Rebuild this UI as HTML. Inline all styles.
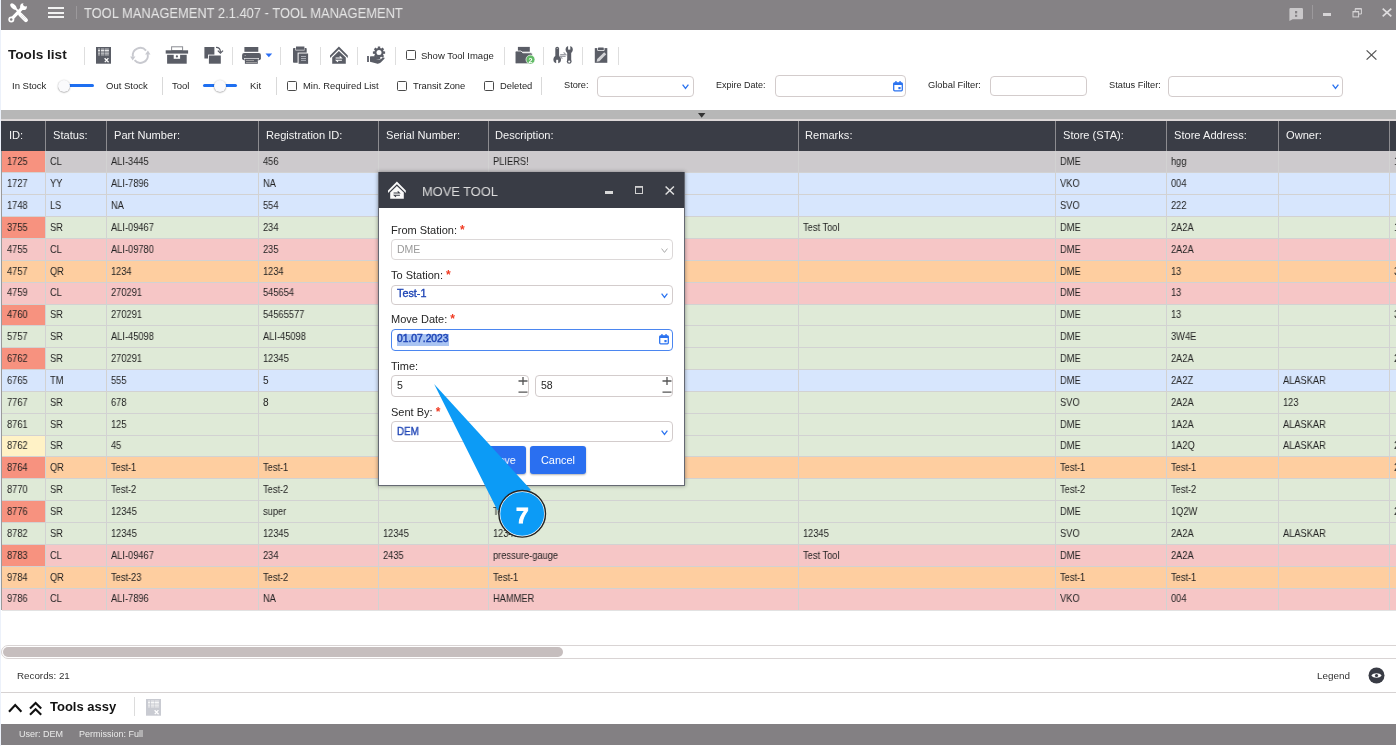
<!DOCTYPE html>
<html><head><meta charset="utf-8"><title>Tool Management</title>
<style>
*{box-sizing:border-box;margin:0;padding:0}
html,body{width:1396px;height:746px;overflow:hidden;background:#fff;font-family:"Liberation Sans", sans-serif}
body{position:relative}
.a{position:absolute}
.t{position:absolute;white-space:nowrap;line-height:1;will-change:transform}
.cb{position:absolute;width:10px;height:10px;border:1.3px solid #4a4a4a;border-radius:1.5px;background:#fff}
.inp{position:absolute;border:1px solid #d3cccc;border-radius:4px;background:#fff}
svg{position:absolute;overflow:visible}
</style></head>
<body>
<div class="a" style="left:0px;top:0px;width:1px;height:746px;background:#ecf1fa"></div>
<div class="a" style="left:1px;top:0px;width:1395px;height:30px;background:#858285"></div>
<svg style="left:8px;top:2px" width="20" height="21" viewBox="0 0 20 21">
<g fill="#fff" stroke="none">
<ellipse cx="5.4" cy="4.4" rx="3.8" ry="2.15" transform="rotate(45 5.4 4.4)"/>
</g>
<path d="M7 6 L12.2 11.2" stroke="#fff" stroke-width="1.8"/>
<path d="M12.2 12.4 L17.9 18.1" stroke="#fff" stroke-width="4.1" stroke-linecap="round"/>
<path d="M13.4 12.4 L17.8 16.8 M12.4 13.6 L16.6 17.8" stroke="#cfcfcf" stroke-width="0.5"/>
<path d="M3.3 17.4 L14.6 5.6" stroke="#fff" stroke-width="3.2"/>
<circle cx="3.3" cy="17.4" r="3" fill="#fff"/>
<circle cx="3.2" cy="17.5" r="1.25" fill="#858285"/>
<circle cx="15.5" cy="4.7" r="3.4" fill="#fff"/>
<circle cx="17.5" cy="2.2" r="2.35" fill="#858285"/>
</svg>
<div class="a" style="left:48px;top:7.1px;width:16px;height:2px;background:#f2f2f2"></div>
<div class="a" style="left:48px;top:11.6px;width:16px;height:2px;background:#f2f2f2"></div>
<div class="a" style="left:48px;top:15.9px;width:16px;height:2px;background:#f2f2f2"></div>
<div class="a" style="left:76px;top:6px;width:1px;height:13px;background:#9c999c"></div>
<div class="t" style="left:84.30px;top:6.30px;font-size:14.3px;color:#e6e6e6;font-weight:normal;transform:scaleX(0.903);transform-origin:0 0">TOOL MANAGEMENT 2.1.407 - TOOL MANAGEMENT</div>
<svg style="left:1289px;top:8px" width="14" height="13" viewBox="0 0 14 13">
<path d="M1.2 0 H12.8 A1.2 1.2 0 0 1 14 1.2 V10 A1.2 1.2 0 0 1 12.8 11.2 H3.6 L0.4 13 V1.2 A1.2 1.2 0 0 1 1.2 0Z" fill="#cac8ca"/>
<rect x="6" y="3" width="2.2" height="2.4" fill="#858285"/><rect x="6" y="6.8" width="2.2" height="2" fill="#858285"/>
</svg>
<div class="a" style="left:1312px;top:5px;width:1px;height:14px;background:#9c999c"></div>
<div class="a" style="left:1323px;top:13px;width:8px;height:3px;background:#d6d4d6"></div>
<svg style="left:1352px;top:8px" width="10" height="10" viewBox="0 0 10 10">
<path d="M3.2 3 V0.6 H9.4 V6 H6.8" fill="none" stroke="#d6d4d6" stroke-width="1"/>
<rect x="3.2" y="0.2" width="6.2" height="1.3" fill="#d6d4d6"/>
<rect x="1" y="3.5" width="5.6" height="5.4" fill="none" stroke="#d6d4d6" stroke-width="1"/>
<rect x="1" y="3.1" width="5.6" height="1.3" fill="#d6d4d6"/>
</svg>
<svg style="left:1382px;top:8px" width="10" height="9" viewBox="0 0 10 9">
<path d="M0.7 0.6 L9.3 8.4 M9.3 0.6 L0.7 8.4" stroke="#dedcde" stroke-width="1.7"/>
</svg>
<div class="t" style="left:8.00px;top:48.09px;font-size:13.6px;color:#1b1b1b;font-weight:bold;">Tools list</div>
<div class="a" style="left:84px;top:47px;width:1px;height:18px;background:#dedede"></div>
<div class="a" style="left:232px;top:47px;width:1px;height:18px;background:#dedede"></div>
<div class="a" style="left:280px;top:47px;width:1px;height:18px;background:#dedede"></div>
<div class="a" style="left:320px;top:47px;width:1px;height:18px;background:#dedede"></div>
<div class="a" style="left:357px;top:47px;width:1px;height:18px;background:#dedede"></div>
<div class="a" style="left:395px;top:47px;width:1px;height:18px;background:#dedede"></div>
<div class="a" style="left:504px;top:47px;width:1px;height:18px;background:#dedede"></div>
<div class="a" style="left:543px;top:47px;width:1px;height:18px;background:#dedede"></div>
<div class="a" style="left:582px;top:47px;width:1px;height:18px;background:#dedede"></div>
<div class="a" style="left:618px;top:47px;width:1px;height:18px;background:#dedede"></div>
<svg style="left:96px;top:47px" width="15" height="17" viewBox="0 0 15 17">
<rect x="0" y="0" width="15" height="16.7" fill="#5a5d66"/>
<rect x="2" y="1.1" width="2" height="7.7" fill="#fff" opacity="0.35"/><rect x="2" y="2.9" width="2" height="1.2" fill="#fff" opacity="0.75"/><rect x="2" y="5.9" width="2" height="1.3" fill="#fff" opacity="0.3"/><rect x="4.9" y="1.1" width="3.1999999999999993" height="7.7" fill="#fff" opacity="0.35"/><rect x="4.9" y="2.9" width="3.1999999999999993" height="1.2" fill="#fff" opacity="0.75"/><rect x="4.9" y="5.9" width="3.1999999999999993" height="1.3" fill="#fff" opacity="0.3"/><rect x="8.7" y="1.1" width="4.200000000000001" height="7.7" fill="#fff" opacity="0.35"/><rect x="8.7" y="2.9" width="4.200000000000001" height="1.2" fill="#fff" opacity="0.75"/><rect x="8.7" y="5.9" width="4.200000000000001" height="1.3" fill="#fff" opacity="0.3"/>
<path d="M8.6 11.2 L12.6 15.2 M12.4 11.2 L8.8 15.2" stroke="#fff" stroke-width="1.25"/>
</svg>
<svg style="left:130px;top:47px" width="21" height="17" viewBox="0 0 21 17">
<g fill="none" stroke="#c8c9cf" stroke-width="1.9">
<path d="M2.91 9.7 A7.5 7.5 0 0 1 16.05 3.58"/>
<path d="M17.69 7.1 A7.5 7.5 0 0 1 4.55 13.22"/>
</g>
<path d="M17.9 3.6 L15.1 7.6 L20.5 7.6 Z" fill="#c8c9cf"/>
<path d="M2.7 13.4 L0.1 9.4 L5.5 9.4 Z" fill="#c8c9cf"/>
</svg>
<svg style="left:165px;top:46px" width="24" height="18" viewBox="0 0 24 18">
<rect x="6.6" y="0.8" width="11" height="3.8" fill="none" stroke="#8a8c92" stroke-width="1"/>
<rect x="0.7" y="4.3" width="22.4" height="3.3" fill="#5a5d66"/>
<rect x="2.1" y="8.8" width="19.6" height="8.9" fill="#5a5d66"/>
<rect x="8.7" y="8" width="6.4" height="4.8" fill="#fff"/>
<circle cx="11.9" cy="10.4" r="1.1" fill="#5a5d66"/>
</svg>
<svg style="left:204px;top:46px" width="20" height="18" viewBox="0 0 20 18">
<rect x="0.4" y="1" width="10" height="11.5" fill="#5a5d66"/>
<rect x="4" y="8.6" width="13.7" height="9.4" fill="#fff"/>
<rect x="4.9" y="9.5" width="11.9" height="8.2" fill="#5a5d66"/>
<path d="M12 1.4 C14.6 1.4 16.4 3.2 16.4 6" fill="none" stroke="#5a5d66" stroke-width="1.2"/>
<path d="M13.8 4.6 L16.4 7.2 L19 4.6" fill="none" stroke="#5a5d66" stroke-width="1.3"/>
</svg>
<svg style="left:241px;top:46px" width="21" height="18" viewBox="0 0 21 18">
<rect x="3.4" y="1" width="13.9" height="4.8" fill="#5a5d66"/>
<rect x="1.1" y="6.9" width="18.8" height="7.3" rx="2" fill="#5a5d66"/>
<rect x="3" y="12.2" width="15" height="1.2" fill="#fff"/>
<rect x="3.9" y="12.8" width="12.9" height="5" fill="#5a5d66"/>
<rect x="5" y="14.2" width="8" height="0.8" fill="#aaa"/><rect x="5" y="16" width="11" height="0.8" fill="#aaa"/>
<rect x="3.6" y="9" width="1.2" height="0.9" fill="#aaa"/>
</svg>
<svg style="left:265px;top:53px" width="8" height="5" viewBox="0 0 8 5"><path d="M0.5 0.5 H7.2 L3.85 4.2Z" fill="#2a6ef5"/></svg>
<svg style="left:292px;top:46px" width="17" height="18" viewBox="0 0 17 18">
<rect x="1" y="2" width="13.7" height="14.8" rx="0.8" fill="#5a5d66"/>
<rect x="3.4" y="0" width="9.2" height="4.4" fill="#fff"/>
<rect x="4" y="0.5" width="8.4" height="3.3" fill="#5a5d66"/>
<rect x="5.6" y="6.6" width="11" height="11.4" fill="#fff"/>
<rect x="6.6" y="7.5" width="9.5" height="10.3" fill="#5a5d66"/>
<rect x="9" y="10" width="5" height="0.9" fill="#b4b7c0"/><rect x="9" y="12" width="5" height="0.9" fill="#b4b7c0"/><rect x="9" y="13.9" width="5" height="0.9" fill="#b4b7c0"/>
</svg>
<svg style="left:330px;top:46px" width="18" height="18" viewBox="0 0 18 18">
<path d="M0 9.4 L8.9 0.6 L17.8 9.4 V11.9 L8.9 3.3 L0 11.9Z" fill="#5a5d66"/>
<path d="M2.2 11.6 L8.9 5.1 L15.8 11.6 V17.8 H2.2Z" fill="#5a5d66"/>
<path d="M5.6 11.9 H11.4 L9.7 10.3 M11.9 14.3 H6.3 L8 15.9" stroke="#fff" stroke-width="1.05" fill="none"/>
</svg>
<svg style="left:367px;top:46px" width="19" height="18" viewBox="0 0 19 18">
<g transform="translate(12 6.6)">
<circle r="4.7" fill="#5a5d66"/>
<g fill="#5a5d66">
<rect x="-1.2" y="-6.1" width="2.4" height="12.2"/>
<rect x="-1.2" y="-6.1" width="2.4" height="12.2" transform="rotate(45)"/>
<rect x="-1.2" y="-6.1" width="2.4" height="12.2" transform="rotate(90)"/>
<rect x="-1.2" y="-6.1" width="2.4" height="12.2" transform="rotate(135)"/>
</g>
<circle r="2.5" fill="#fff"/>
</g>
<rect x="0.1" y="10" width="1.8" height="6" fill="#5a5d66"/>
<path d="M3 10.6 C5 10 7.6 10 9.6 10.6 L12.6 11.4 C13.6 11.7 13.6 12.9 12.6 12.9 L8.8 12.9 L13 13.4 L16.2 11.6 C17.2 11.2 18 12 17.4 12.8 L13.8 16.6 C12.8 17.6 11 17.9 9.6 17.5 L3 15.8Z" fill="#5a5d66"/>
</svg>
<div class="cb" style="left:406px;top:50px"></div>
<div class="t" style="left:421.30px;top:50.76px;font-size:9.5px;color:#262626;font-weight:normal;">Show Tool Image</div>
<svg style="left:514px;top:46px;will-change:transform" width="22" height="18" viewBox="0 0 22 18">
<rect x="3.9" y="0.9" width="11.9" height="4.8" fill="#5a5d66"/>
<path d="M1.1 6.4 Q1.1 5 2.5 5 H7 L8.8 6.8 H16.8 Q18.4 6.8 18.4 8.2 V16.4 Q18.4 17.8 17 17.8 H2.5 Q1.1 17.8 1.1 16.4 Z" fill="#5a5d66" stroke="#fff" stroke-width="0.8"/>
<circle cx="16.5" cy="13.6" r="4.5" fill="#62bb66" stroke="#fff" stroke-width="0.7"/>
<text x="16.6" y="16.5" font-family="Liberation Sans" font-weight="bold" font-size="7.2" fill="#fff" text-anchor="middle">2</text>
</svg>
<svg style="left:553px;top:46px" width="20" height="18" viewBox="0 0 20 18">
<rect x="2.3" y="0.7" width="3.8" height="12" rx="1.9" fill="#5a5d66"/>
<circle cx="4.2" cy="13.6" r="3.8" fill="#5a5d66"/>
<rect x="3.2" y="13.8" width="2" height="4.2" fill="#fff"/>
<circle cx="4.2" cy="2.5" r="0.6" fill="#ccc"/>
<circle cx="16.2" cy="3.6" r="3.6" fill="#5a5d66"/>
<rect x="15.1" y="0" width="2.2" height="3.6" fill="#fff"/>
<rect x="14.2" y="4" width="4" height="11" fill="#5a5d66"/>
<circle cx="16.2" cy="15.4" r="2.4" fill="#5a5d66"/>
<circle cx="16.2" cy="15.6" r="1.1" fill="#fff"/>
<path d="M7.2 8.6 H12.8 L10.6 6.4 M12.6 10.4 H7.2 L9.4 12.6" stroke="#9ea0a7" stroke-width="1.2" fill="none"/>
</svg>
<svg style="left:594px;top:46px" width="14" height="18" viewBox="0 0 14 18">
<rect x="0.8" y="2.1" width="12.5" height="14.7" fill="#5a5d66"/>
<rect x="3.3" y="0.8" width="7.2" height="4.2" rx="1" fill="#fff"/>
<rect x="4" y="1.4" width="5.8" height="2.9" rx="0.6" fill="#5a5d66"/>
<path d="M2.6 15.8 L3.2 13 L10.2 6.2 L12.2 8.2 L5.4 15.2 Z" fill="#d2d3d6"/>
</svg>
<svg style="left:1366px;top:50px" width="11" height="10" viewBox="0 0 11 10"><path d="M0.6 0.4 L10.4 9.6 M10.4 0.4 L0.6 9.6" stroke="#555" stroke-width="1.3"/></svg>
<div class="t" style="left:12.00px;top:80.66px;font-size:9.5px;color:#262626;font-weight:normal;">In Stock</div>
<div class="a" style="left:64px;top:84.0px;width:30px;height:3.0px;background:#1e6ff1;border-radius:1.5px"></div><div class="a" style="left:58px;top:79.5px;width:12px;height:12px;border-radius:6px;background:#fafafc;box-shadow:0 0.5px 1.5px rgba(0,0,0,0.45)"></div>
<div class="t" style="left:106.00px;top:80.66px;font-size:9.5px;color:#262626;font-weight:normal;">Out Stock</div>
<div class="a" style="left:162px;top:77px;width:1px;height:18px;background:#d9d9d9"></div>
<div class="t" style="left:172.10px;top:80.66px;font-size:9.5px;color:#262626;font-weight:normal;">Tool</div>
<div class="a" style="left:202.5px;top:84.0px;width:34.5px;height:3.0px;background:#1e6ff1;border-radius:1.5px"></div><div class="a" style="left:213.7px;top:79.5px;width:12px;height:12px;border-radius:6px;background:#fafafc;box-shadow:0 0.5px 1.5px rgba(0,0,0,0.45)"></div>
<div class="t" style="left:249.70px;top:80.66px;font-size:9.5px;color:#262626;font-weight:normal;">Kit</div>
<div class="a" style="left:276px;top:77px;width:1px;height:18px;background:#d9d9d9"></div>
<div class="cb" style="left:287px;top:81px"></div>
<div class="t" style="left:303.00px;top:80.74px;font-size:9.4px;color:#262626;font-weight:normal;">Min. Required List</div>
<div class="cb" style="left:397px;top:81px"></div>
<div class="t" style="left:413.00px;top:80.74px;font-size:9.4px;color:#262626;font-weight:normal;">Transit Zone</div>
<div class="cb" style="left:484px;top:81px"></div>
<div class="t" style="left:499.60px;top:80.74px;font-size:9.4px;color:#262626;font-weight:normal;">Deleted</div>
<div class="a" style="left:541px;top:77px;width:1px;height:18px;background:#d9d9d9"></div>
<div class="t" style="left:564.00px;top:80.91px;font-size:9.2px;color:#262626;font-weight:normal;">Store:</div>
<div class="inp" style="left:597px;top:75.5px;width:97px;height:21px"></div>
<svg style="left:682px;top:84px" width="7" height="5.4" viewBox="0 0 7 5.4"><path d="M0.6 0.6 L3.5 4.4 L6.4 0.6" fill="none" stroke="#2b73f0" stroke-width="1.3"/></svg>
<div class="t" style="left:715.80px;top:81.08px;font-size:9.0px;color:#262626;font-weight:normal;">Expire Date:</div>
<div class="inp" style="left:775px;top:75px;width:131px;height:21.5px"></div>
<svg style="left:893px;top:80.5px" width="10" height="10.5" viewBox="0 0 10 10.5">
<rect x="0.7" y="1.8" width="8.6" height="8" rx="1" fill="none" stroke="#2b73f0" stroke-width="1.3"/>
<rect x="0.7" y="1.8" width="8.6" height="2.2" fill="#2b73f0"/>
<rect x="2.3" y="0" width="1.3" height="2.4" fill="#2b73f0"/><rect x="6.4" y="0" width="1.3" height="2.4" fill="#2b73f0"/>
<rect x="5.4" y="6" width="2.2" height="2.2" fill="#2b73f0"/>
</svg>
<div class="t" style="left:928.00px;top:80.79px;font-size:9.35px;color:#262626;font-weight:normal;">Global Filter:</div>
<div class="inp" style="left:990px;top:75.5px;width:97px;height:20.5px"></div>
<div class="t" style="left:1108.60px;top:80.87px;font-size:9.25px;color:#262626;font-weight:normal;">Status Filter:</div>
<div class="inp" style="left:1168px;top:75.5px;width:175px;height:21px"></div>
<svg style="left:1332px;top:84px" width="7" height="5.4" viewBox="0 0 7 5.4"><path d="M0.6 0.6 L3.5 4.4 L6.4 0.6" fill="none" stroke="#2b73f0" stroke-width="1.3"/></svg>
<div class="a" style="left:1px;top:110px;width:1395px;height:9px;background:#b7b7b7"></div>
<div class="a" style="left:1px;top:119px;width:1395px;height:2px;background:#ddd8d8"></div>
<svg style="left:698px;top:113px" width="8" height="5" viewBox="0 0 8 5"><path d="M0 0 H7.4 L3.7 4.8Z" fill="#333"/></svg>
<div class="a" style="left:1px;top:121px;width:1395px;height:30px;background:#3a3d46"></div>
<div class="a" style="left:45px;top:121px;width:1px;height:30px;background:#8c8c90"></div>
<div class="a" style="left:106px;top:121px;width:1px;height:30px;background:#8c8c90"></div>
<div class="a" style="left:258px;top:121px;width:1px;height:30px;background:#8c8c90"></div>
<div class="a" style="left:378px;top:121px;width:1px;height:30px;background:#8c8c90"></div>
<div class="a" style="left:488px;top:121px;width:1px;height:30px;background:#8c8c90"></div>
<div class="a" style="left:798px;top:121px;width:1px;height:30px;background:#8c8c90"></div>
<div class="a" style="left:1055px;top:121px;width:1px;height:30px;background:#8c8c90"></div>
<div class="a" style="left:1166px;top:121px;width:1px;height:30px;background:#8c8c90"></div>
<div class="a" style="left:1278px;top:121px;width:1px;height:30px;background:#8c8c90"></div>
<div class="a" style="left:1389px;top:121px;width:1px;height:30px;background:#8c8c90"></div>
<div class="t" style="left:9.00px;top:130.40px;font-size:11.1px;color:#f4f4f4;font-weight:normal;">ID:</div>
<div class="t" style="left:52.80px;top:130.40px;font-size:11.1px;color:#f4f4f4;font-weight:normal;">Status:</div>
<div class="t" style="left:113.90px;top:130.40px;font-size:11.1px;color:#f4f4f4;font-weight:normal;">Part Number:</div>
<div class="t" style="left:265.80px;top:130.40px;font-size:11.1px;color:#f4f4f4;font-weight:normal;">Registration ID:</div>
<div class="t" style="left:386.00px;top:130.40px;font-size:11.1px;color:#f4f4f4;font-weight:normal;">Serial Number:</div>
<div class="t" style="left:495.00px;top:130.40px;font-size:11.1px;color:#f4f4f4;font-weight:normal;">Description:</div>
<div class="t" style="left:805.00px;top:130.40px;font-size:11.1px;color:#f4f4f4;font-weight:normal;">Remarks:</div>
<div class="t" style="left:1063.00px;top:130.40px;font-size:11.1px;color:#f4f4f4;font-weight:normal;">Store (STA):</div>
<div class="t" style="left:1174.00px;top:130.40px;font-size:11.1px;color:#f4f4f4;font-weight:normal;">Store Address:</div>
<div class="t" style="left:1286.00px;top:130.40px;font-size:11.1px;color:#f4f4f4;font-weight:normal;">Owner:</div>
<div class="a" style="left:1px;top:151px;width:1px;height:459px;background:#9a9a9a"></div>
<div class="a" style="left:2px;top:151.000px;width:1394px;height:21.857px;background:#cdcacd"></div>
<div class="a" style="left:2px;top:151.000px;width:43px;height:21.857px;background:#f7927f"></div>
<div class="t" style="left:7px;top:157.35px;font-size:10.1px;color:#222;transform:scaleX(0.92);transform-origin:0 0">1725</div>
<div class="t" style="left:50px;top:157.35px;font-size:10.1px;color:#222;transform:scaleX(0.92);transform-origin:0 0">CL</div>
<div class="t" style="left:111px;top:157.35px;font-size:10.1px;color:#222;transform:scaleX(0.92);transform-origin:0 0">ALI-3445</div>
<div class="t" style="left:263px;top:157.35px;font-size:10.1px;color:#222;transform:scaleX(0.92);transform-origin:0 0">456</div>
<div class="t" style="left:493px;top:157.35px;font-size:10.1px;color:#222;transform:scaleX(0.92);transform-origin:0 0">PLIERS!</div>
<div class="t" style="left:1060px;top:157.35px;font-size:10.1px;color:#222;transform:scaleX(0.92);transform-origin:0 0">DME</div>
<div class="t" style="left:1171px;top:157.35px;font-size:10.1px;color:#222;transform:scaleX(0.92);transform-origin:0 0">hgg</div>
<div class="t" style="left:1394px;top:157.35px;font-size:10.1px;color:#222;transform:scaleX(0.92);transform-origin:0 0">1</div>
<div class="a" style="left:2px;top:172.857px;width:1394px;height:21.857px;background:#d7e6fd"></div>
<div class="a" style="left:2px;top:172px;width:1394px;height:1px;background:#d2d2d2"></div>
<div class="t" style="left:7px;top:179.21px;font-size:10.1px;color:#222;transform:scaleX(0.92);transform-origin:0 0">1727</div>
<div class="t" style="left:50px;top:179.21px;font-size:10.1px;color:#222;transform:scaleX(0.92);transform-origin:0 0">YY</div>
<div class="t" style="left:111px;top:179.21px;font-size:10.1px;color:#222;transform:scaleX(0.92);transform-origin:0 0">ALI-7896</div>
<div class="t" style="left:263px;top:179.21px;font-size:10.1px;color:#222;transform:scaleX(0.92);transform-origin:0 0">NA</div>
<div class="t" style="left:1060px;top:179.21px;font-size:10.1px;color:#222;transform:scaleX(0.92);transform-origin:0 0">VKO</div>
<div class="t" style="left:1171px;top:179.21px;font-size:10.1px;color:#222;transform:scaleX(0.92);transform-origin:0 0">004</div>
<div class="a" style="left:2px;top:194.714px;width:1394px;height:21.857px;background:#d7e6fd"></div>
<div class="a" style="left:2px;top:194px;width:1394px;height:1px;background:#d2d2d2"></div>
<div class="t" style="left:7px;top:201.06px;font-size:10.1px;color:#222;transform:scaleX(0.92);transform-origin:0 0">1748</div>
<div class="t" style="left:50px;top:201.06px;font-size:10.1px;color:#222;transform:scaleX(0.92);transform-origin:0 0">LS</div>
<div class="t" style="left:111px;top:201.06px;font-size:10.1px;color:#222;transform:scaleX(0.92);transform-origin:0 0">NA</div>
<div class="t" style="left:263px;top:201.06px;font-size:10.1px;color:#222;transform:scaleX(0.92);transform-origin:0 0">554</div>
<div class="t" style="left:1060px;top:201.06px;font-size:10.1px;color:#222;transform:scaleX(0.92);transform-origin:0 0">SVO</div>
<div class="t" style="left:1171px;top:201.06px;font-size:10.1px;color:#222;transform:scaleX(0.92);transform-origin:0 0">222</div>
<div class="a" style="left:2px;top:216.571px;width:1394px;height:21.857px;background:#dfead7"></div>
<div class="a" style="left:2px;top:216.571px;width:43px;height:21.857px;background:#f7927f"></div>
<div class="a" style="left:2px;top:216px;width:1394px;height:1px;background:#d2d2d2"></div>
<div class="t" style="left:7px;top:222.92px;font-size:10.1px;color:#222;transform:scaleX(0.92);transform-origin:0 0">3755</div>
<div class="t" style="left:50px;top:222.92px;font-size:10.1px;color:#222;transform:scaleX(0.92);transform-origin:0 0">SR</div>
<div class="t" style="left:111px;top:222.92px;font-size:10.1px;color:#222;transform:scaleX(0.92);transform-origin:0 0">ALI-09467</div>
<div class="t" style="left:263px;top:222.92px;font-size:10.1px;color:#222;transform:scaleX(0.92);transform-origin:0 0">234</div>
<div class="t" style="left:803px;top:222.92px;font-size:10.1px;color:#222;transform:scaleX(0.92);transform-origin:0 0">Test Tool</div>
<div class="t" style="left:1060px;top:222.92px;font-size:10.1px;color:#222;transform:scaleX(0.92);transform-origin:0 0">DME</div>
<div class="t" style="left:1171px;top:222.92px;font-size:10.1px;color:#222;transform:scaleX(0.92);transform-origin:0 0">2A2A</div>
<div class="t" style="left:1394px;top:222.92px;font-size:10.1px;color:#222;transform:scaleX(0.92);transform-origin:0 0">1</div>
<div class="a" style="left:2px;top:238.429px;width:1394px;height:21.857px;background:#f6c6c6"></div>
<div class="a" style="left:2px;top:238px;width:1394px;height:1px;background:#d2d2d2"></div>
<div class="t" style="left:7px;top:244.78px;font-size:10.1px;color:#222;transform:scaleX(0.92);transform-origin:0 0">4755</div>
<div class="t" style="left:50px;top:244.78px;font-size:10.1px;color:#222;transform:scaleX(0.92);transform-origin:0 0">CL</div>
<div class="t" style="left:111px;top:244.78px;font-size:10.1px;color:#222;transform:scaleX(0.92);transform-origin:0 0">ALI-09780</div>
<div class="t" style="left:263px;top:244.78px;font-size:10.1px;color:#222;transform:scaleX(0.92);transform-origin:0 0">235</div>
<div class="t" style="left:1060px;top:244.78px;font-size:10.1px;color:#222;transform:scaleX(0.92);transform-origin:0 0">DME</div>
<div class="t" style="left:1171px;top:244.78px;font-size:10.1px;color:#222;transform:scaleX(0.92);transform-origin:0 0">2A2A</div>
<div class="a" style="left:2px;top:260.286px;width:1394px;height:21.857px;background:#fecea0"></div>
<div class="a" style="left:2px;top:260px;width:1394px;height:1px;background:#d2d2d2"></div>
<div class="t" style="left:7px;top:266.64px;font-size:10.1px;color:#222;transform:scaleX(0.92);transform-origin:0 0">4757</div>
<div class="t" style="left:50px;top:266.64px;font-size:10.1px;color:#222;transform:scaleX(0.92);transform-origin:0 0">QR</div>
<div class="t" style="left:111px;top:266.64px;font-size:10.1px;color:#222;transform:scaleX(0.92);transform-origin:0 0">1234</div>
<div class="t" style="left:263px;top:266.64px;font-size:10.1px;color:#222;transform:scaleX(0.92);transform-origin:0 0">1234</div>
<div class="t" style="left:1060px;top:266.64px;font-size:10.1px;color:#222;transform:scaleX(0.92);transform-origin:0 0">DME</div>
<div class="t" style="left:1171px;top:266.64px;font-size:10.1px;color:#222;transform:scaleX(0.92);transform-origin:0 0">13</div>
<div class="t" style="left:1394px;top:266.64px;font-size:10.1px;color:#222;transform:scaleX(0.92);transform-origin:0 0">3</div>
<div class="a" style="left:2px;top:282.143px;width:1394px;height:21.857px;background:#f6c6c6"></div>
<div class="a" style="left:2px;top:282px;width:1394px;height:1px;background:#d2d2d2"></div>
<div class="t" style="left:7px;top:288.49px;font-size:10.1px;color:#222;transform:scaleX(0.92);transform-origin:0 0">4759</div>
<div class="t" style="left:50px;top:288.49px;font-size:10.1px;color:#222;transform:scaleX(0.92);transform-origin:0 0">CL</div>
<div class="t" style="left:111px;top:288.49px;font-size:10.1px;color:#222;transform:scaleX(0.92);transform-origin:0 0">270291</div>
<div class="t" style="left:263px;top:288.49px;font-size:10.1px;color:#222;transform:scaleX(0.92);transform-origin:0 0">545654</div>
<div class="t" style="left:1060px;top:288.49px;font-size:10.1px;color:#222;transform:scaleX(0.92);transform-origin:0 0">DME</div>
<div class="t" style="left:1171px;top:288.49px;font-size:10.1px;color:#222;transform:scaleX(0.92);transform-origin:0 0">13</div>
<div class="a" style="left:2px;top:304.000px;width:1394px;height:21.857px;background:#dfead7"></div>
<div class="a" style="left:2px;top:304.000px;width:43px;height:21.857px;background:#f7927f"></div>
<div class="a" style="left:2px;top:304px;width:1394px;height:1px;background:#d2d2d2"></div>
<div class="t" style="left:7px;top:310.35px;font-size:10.1px;color:#222;transform:scaleX(0.92);transform-origin:0 0">4760</div>
<div class="t" style="left:50px;top:310.35px;font-size:10.1px;color:#222;transform:scaleX(0.92);transform-origin:0 0">SR</div>
<div class="t" style="left:111px;top:310.35px;font-size:10.1px;color:#222;transform:scaleX(0.92);transform-origin:0 0">270291</div>
<div class="t" style="left:263px;top:310.35px;font-size:10.1px;color:#222;transform:scaleX(0.92);transform-origin:0 0">54565577</div>
<div class="t" style="left:1060px;top:310.35px;font-size:10.1px;color:#222;transform:scaleX(0.92);transform-origin:0 0">DME</div>
<div class="t" style="left:1171px;top:310.35px;font-size:10.1px;color:#222;transform:scaleX(0.92);transform-origin:0 0">13</div>
<div class="t" style="left:1394px;top:310.35px;font-size:10.1px;color:#222;transform:scaleX(0.92);transform-origin:0 0">3</div>
<div class="a" style="left:2px;top:325.857px;width:1394px;height:21.857px;background:#dfead7"></div>
<div class="a" style="left:2px;top:325px;width:1394px;height:1px;background:#d2d2d2"></div>
<div class="t" style="left:7px;top:332.21px;font-size:10.1px;color:#222;transform:scaleX(0.92);transform-origin:0 0">5757</div>
<div class="t" style="left:50px;top:332.21px;font-size:10.1px;color:#222;transform:scaleX(0.92);transform-origin:0 0">SR</div>
<div class="t" style="left:111px;top:332.21px;font-size:10.1px;color:#222;transform:scaleX(0.92);transform-origin:0 0">ALI-45098</div>
<div class="t" style="left:263px;top:332.21px;font-size:10.1px;color:#222;transform:scaleX(0.92);transform-origin:0 0">ALI-45098</div>
<div class="t" style="left:1060px;top:332.21px;font-size:10.1px;color:#222;transform:scaleX(0.92);transform-origin:0 0">DME</div>
<div class="t" style="left:1171px;top:332.21px;font-size:10.1px;color:#222;transform:scaleX(0.92);transform-origin:0 0">3W4E</div>
<div class="a" style="left:2px;top:347.714px;width:1394px;height:21.857px;background:#dfead7"></div>
<div class="a" style="left:2px;top:347.714px;width:43px;height:21.857px;background:#f7927f"></div>
<div class="a" style="left:2px;top:347px;width:1394px;height:1px;background:#d2d2d2"></div>
<div class="t" style="left:7px;top:354.06px;font-size:10.1px;color:#222;transform:scaleX(0.92);transform-origin:0 0">6762</div>
<div class="t" style="left:50px;top:354.06px;font-size:10.1px;color:#222;transform:scaleX(0.92);transform-origin:0 0">SR</div>
<div class="t" style="left:111px;top:354.06px;font-size:10.1px;color:#222;transform:scaleX(0.92);transform-origin:0 0">270291</div>
<div class="t" style="left:263px;top:354.06px;font-size:10.1px;color:#222;transform:scaleX(0.92);transform-origin:0 0">12345</div>
<div class="t" style="left:1060px;top:354.06px;font-size:10.1px;color:#222;transform:scaleX(0.92);transform-origin:0 0">DME</div>
<div class="t" style="left:1171px;top:354.06px;font-size:10.1px;color:#222;transform:scaleX(0.92);transform-origin:0 0">2A2A</div>
<div class="t" style="left:1394px;top:354.06px;font-size:10.1px;color:#222;transform:scaleX(0.92);transform-origin:0 0">2</div>
<div class="a" style="left:2px;top:369.571px;width:1394px;height:21.857px;background:#d7e6fd"></div>
<div class="a" style="left:2px;top:369px;width:1394px;height:1px;background:#d2d2d2"></div>
<div class="t" style="left:7px;top:375.92px;font-size:10.1px;color:#222;transform:scaleX(0.92);transform-origin:0 0">6765</div>
<div class="t" style="left:50px;top:375.92px;font-size:10.1px;color:#222;transform:scaleX(0.92);transform-origin:0 0">TM</div>
<div class="t" style="left:111px;top:375.92px;font-size:10.1px;color:#222;transform:scaleX(0.92);transform-origin:0 0">555</div>
<div class="t" style="left:263px;top:375.92px;font-size:10.1px;color:#222;transform:scaleX(0.92);transform-origin:0 0">5</div>
<div class="t" style="left:1060px;top:375.92px;font-size:10.1px;color:#222;transform:scaleX(0.92);transform-origin:0 0">DME</div>
<div class="t" style="left:1171px;top:375.92px;font-size:10.1px;color:#222;transform:scaleX(0.92);transform-origin:0 0">2A2Z</div>
<div class="t" style="left:1283px;top:375.92px;font-size:10.1px;color:#222;transform:scaleX(0.92);transform-origin:0 0">ALASKAR</div>
<div class="a" style="left:2px;top:391.429px;width:1394px;height:21.857px;background:#dfead7"></div>
<div class="a" style="left:2px;top:391px;width:1394px;height:1px;background:#d2d2d2"></div>
<div class="t" style="left:7px;top:397.78px;font-size:10.1px;color:#222;transform:scaleX(0.92);transform-origin:0 0">7767</div>
<div class="t" style="left:50px;top:397.78px;font-size:10.1px;color:#222;transform:scaleX(0.92);transform-origin:0 0">SR</div>
<div class="t" style="left:111px;top:397.78px;font-size:10.1px;color:#222;transform:scaleX(0.92);transform-origin:0 0">678</div>
<div class="t" style="left:263px;top:397.78px;font-size:10.1px;color:#222;transform:scaleX(0.92);transform-origin:0 0">8</div>
<div class="t" style="left:1060px;top:397.78px;font-size:10.1px;color:#222;transform:scaleX(0.92);transform-origin:0 0">SVO</div>
<div class="t" style="left:1171px;top:397.78px;font-size:10.1px;color:#222;transform:scaleX(0.92);transform-origin:0 0">2A2A</div>
<div class="t" style="left:1283px;top:397.78px;font-size:10.1px;color:#222;transform:scaleX(0.92);transform-origin:0 0">123</div>
<div class="a" style="left:2px;top:413.286px;width:1394px;height:21.857px;background:#dfead7"></div>
<div class="a" style="left:2px;top:413px;width:1394px;height:1px;background:#d2d2d2"></div>
<div class="t" style="left:7px;top:419.64px;font-size:10.1px;color:#222;transform:scaleX(0.92);transform-origin:0 0">8761</div>
<div class="t" style="left:50px;top:419.64px;font-size:10.1px;color:#222;transform:scaleX(0.92);transform-origin:0 0">SR</div>
<div class="t" style="left:111px;top:419.64px;font-size:10.1px;color:#222;transform:scaleX(0.92);transform-origin:0 0">125</div>
<div class="t" style="left:1060px;top:419.64px;font-size:10.1px;color:#222;transform:scaleX(0.92);transform-origin:0 0">DME</div>
<div class="t" style="left:1171px;top:419.64px;font-size:10.1px;color:#222;transform:scaleX(0.92);transform-origin:0 0">1A2A</div>
<div class="t" style="left:1283px;top:419.64px;font-size:10.1px;color:#222;transform:scaleX(0.92);transform-origin:0 0">ALASKAR</div>
<div class="a" style="left:2px;top:435.143px;width:1394px;height:21.857px;background:#dfead7"></div>
<div class="a" style="left:2px;top:435.143px;width:43px;height:21.857px;background:#fff2c6"></div>
<div class="a" style="left:2px;top:435px;width:1394px;height:1px;background:#d2d2d2"></div>
<div class="t" style="left:7px;top:441.49px;font-size:10.1px;color:#222;transform:scaleX(0.92);transform-origin:0 0">8762</div>
<div class="t" style="left:50px;top:441.49px;font-size:10.1px;color:#222;transform:scaleX(0.92);transform-origin:0 0">SR</div>
<div class="t" style="left:111px;top:441.49px;font-size:10.1px;color:#222;transform:scaleX(0.92);transform-origin:0 0">45</div>
<div class="t" style="left:1060px;top:441.49px;font-size:10.1px;color:#222;transform:scaleX(0.92);transform-origin:0 0">DME</div>
<div class="t" style="left:1171px;top:441.49px;font-size:10.1px;color:#222;transform:scaleX(0.92);transform-origin:0 0">1A2Q</div>
<div class="t" style="left:1283px;top:441.49px;font-size:10.1px;color:#222;transform:scaleX(0.92);transform-origin:0 0">ALASKAR</div>
<div class="t" style="left:1394px;top:441.49px;font-size:10.1px;color:#222;transform:scaleX(0.92);transform-origin:0 0">2</div>
<div class="a" style="left:2px;top:457.000px;width:1394px;height:21.857px;background:#fecea0"></div>
<div class="a" style="left:2px;top:457.000px;width:43px;height:21.857px;background:#f7927f"></div>
<div class="a" style="left:2px;top:456px;width:1394px;height:1px;background:#d2d2d2"></div>
<div class="t" style="left:7px;top:463.35px;font-size:10.1px;color:#222;transform:scaleX(0.92);transform-origin:0 0">8764</div>
<div class="t" style="left:50px;top:463.35px;font-size:10.1px;color:#222;transform:scaleX(0.92);transform-origin:0 0">QR</div>
<div class="t" style="left:111px;top:463.35px;font-size:10.1px;color:#222;transform:scaleX(0.92);transform-origin:0 0">Test-1</div>
<div class="t" style="left:263px;top:463.35px;font-size:10.1px;color:#222;transform:scaleX(0.92);transform-origin:0 0">Test-1</div>
<div class="t" style="left:1060px;top:463.35px;font-size:10.1px;color:#222;transform:scaleX(0.92);transform-origin:0 0">Test-1</div>
<div class="t" style="left:1171px;top:463.35px;font-size:10.1px;color:#222;transform:scaleX(0.92);transform-origin:0 0">Test-1</div>
<div class="t" style="left:1394px;top:463.35px;font-size:10.1px;color:#222;transform:scaleX(0.92);transform-origin:0 0">2</div>
<div class="a" style="left:2px;top:478.857px;width:1394px;height:21.857px;background:#dfead7"></div>
<div class="a" style="left:2px;top:478px;width:1394px;height:1px;background:#d2d2d2"></div>
<div class="t" style="left:7px;top:485.21px;font-size:10.1px;color:#222;transform:scaleX(0.92);transform-origin:0 0">8770</div>
<div class="t" style="left:50px;top:485.21px;font-size:10.1px;color:#222;transform:scaleX(0.92);transform-origin:0 0">SR</div>
<div class="t" style="left:111px;top:485.21px;font-size:10.1px;color:#222;transform:scaleX(0.92);transform-origin:0 0">Test-2</div>
<div class="t" style="left:263px;top:485.21px;font-size:10.1px;color:#222;transform:scaleX(0.92);transform-origin:0 0">Test-2</div>
<div class="t" style="left:1060px;top:485.21px;font-size:10.1px;color:#222;transform:scaleX(0.92);transform-origin:0 0">Test-2</div>
<div class="t" style="left:1171px;top:485.21px;font-size:10.1px;color:#222;transform:scaleX(0.92);transform-origin:0 0">Test-2</div>
<div class="a" style="left:2px;top:500.714px;width:1394px;height:21.857px;background:#dfead7"></div>
<div class="a" style="left:2px;top:500.714px;width:43px;height:21.857px;background:#f7927f"></div>
<div class="a" style="left:2px;top:500px;width:1394px;height:1px;background:#d2d2d2"></div>
<div class="t" style="left:7px;top:507.06px;font-size:10.1px;color:#222;transform:scaleX(0.92);transform-origin:0 0">8776</div>
<div class="t" style="left:50px;top:507.06px;font-size:10.1px;color:#222;transform:scaleX(0.92);transform-origin:0 0">SR</div>
<div class="t" style="left:111px;top:507.06px;font-size:10.1px;color:#222;transform:scaleX(0.92);transform-origin:0 0">12345</div>
<div class="t" style="left:263px;top:507.06px;font-size:10.1px;color:#222;transform:scaleX(0.92);transform-origin:0 0">super</div>
<div class="t" style="left:493px;top:507.06px;font-size:10.1px;color:#222;transform:scaleX(0.92);transform-origin:0 0">Test</div>
<div class="t" style="left:1060px;top:507.06px;font-size:10.1px;color:#222;transform:scaleX(0.92);transform-origin:0 0">DME</div>
<div class="t" style="left:1171px;top:507.06px;font-size:10.1px;color:#222;transform:scaleX(0.92);transform-origin:0 0">1Q2W</div>
<div class="t" style="left:1394px;top:507.06px;font-size:10.1px;color:#222;transform:scaleX(0.92);transform-origin:0 0">2</div>
<div class="a" style="left:2px;top:522.571px;width:1394px;height:21.857px;background:#dfead7"></div>
<div class="a" style="left:2px;top:522px;width:1394px;height:1px;background:#d2d2d2"></div>
<div class="t" style="left:7px;top:528.92px;font-size:10.1px;color:#222;transform:scaleX(0.92);transform-origin:0 0">8782</div>
<div class="t" style="left:50px;top:528.92px;font-size:10.1px;color:#222;transform:scaleX(0.92);transform-origin:0 0">SR</div>
<div class="t" style="left:111px;top:528.92px;font-size:10.1px;color:#222;transform:scaleX(0.92);transform-origin:0 0">12345</div>
<div class="t" style="left:263px;top:528.92px;font-size:10.1px;color:#222;transform:scaleX(0.92);transform-origin:0 0">12345</div>
<div class="t" style="left:383px;top:528.92px;font-size:10.1px;color:#222;transform:scaleX(0.92);transform-origin:0 0">12345</div>
<div class="t" style="left:493px;top:528.92px;font-size:10.1px;color:#222;transform:scaleX(0.92);transform-origin:0 0">12345</div>
<div class="t" style="left:803px;top:528.92px;font-size:10.1px;color:#222;transform:scaleX(0.92);transform-origin:0 0">12345</div>
<div class="t" style="left:1060px;top:528.92px;font-size:10.1px;color:#222;transform:scaleX(0.92);transform-origin:0 0">SVO</div>
<div class="t" style="left:1171px;top:528.92px;font-size:10.1px;color:#222;transform:scaleX(0.92);transform-origin:0 0">2A2A</div>
<div class="t" style="left:1283px;top:528.92px;font-size:10.1px;color:#222;transform:scaleX(0.92);transform-origin:0 0">ALASKAR</div>
<div class="a" style="left:2px;top:544.429px;width:1394px;height:21.857px;background:#f6c6c6"></div>
<div class="a" style="left:2px;top:544.429px;width:43px;height:21.857px;background:#f7927f"></div>
<div class="a" style="left:2px;top:544px;width:1394px;height:1px;background:#d2d2d2"></div>
<div class="t" style="left:7px;top:550.78px;font-size:10.1px;color:#222;transform:scaleX(0.92);transform-origin:0 0">8783</div>
<div class="t" style="left:50px;top:550.78px;font-size:10.1px;color:#222;transform:scaleX(0.92);transform-origin:0 0">CL</div>
<div class="t" style="left:111px;top:550.78px;font-size:10.1px;color:#222;transform:scaleX(0.92);transform-origin:0 0">ALI-09467</div>
<div class="t" style="left:263px;top:550.78px;font-size:10.1px;color:#222;transform:scaleX(0.92);transform-origin:0 0">234</div>
<div class="t" style="left:383px;top:550.78px;font-size:10.1px;color:#222;transform:scaleX(0.92);transform-origin:0 0">2435</div>
<div class="t" style="left:493px;top:550.78px;font-size:10.1px;color:#222;transform:scaleX(0.92);transform-origin:0 0">pressure-gauge</div>
<div class="t" style="left:803px;top:550.78px;font-size:10.1px;color:#222;transform:scaleX(0.92);transform-origin:0 0">Test Tool</div>
<div class="t" style="left:1060px;top:550.78px;font-size:10.1px;color:#222;transform:scaleX(0.92);transform-origin:0 0">DME</div>
<div class="t" style="left:1171px;top:550.78px;font-size:10.1px;color:#222;transform:scaleX(0.92);transform-origin:0 0">2A2A</div>
<div class="a" style="left:2px;top:566.286px;width:1394px;height:21.857px;background:#fecea0"></div>
<div class="a" style="left:2px;top:566px;width:1394px;height:1px;background:#d2d2d2"></div>
<div class="t" style="left:7px;top:572.64px;font-size:10.1px;color:#222;transform:scaleX(0.92);transform-origin:0 0">9784</div>
<div class="t" style="left:50px;top:572.64px;font-size:10.1px;color:#222;transform:scaleX(0.92);transform-origin:0 0">QR</div>
<div class="t" style="left:111px;top:572.64px;font-size:10.1px;color:#222;transform:scaleX(0.92);transform-origin:0 0">Test-23</div>
<div class="t" style="left:263px;top:572.64px;font-size:10.1px;color:#222;transform:scaleX(0.92);transform-origin:0 0">Test-2</div>
<div class="t" style="left:493px;top:572.64px;font-size:10.1px;color:#222;transform:scaleX(0.92);transform-origin:0 0">Test-1</div>
<div class="t" style="left:1060px;top:572.64px;font-size:10.1px;color:#222;transform:scaleX(0.92);transform-origin:0 0">Test-1</div>
<div class="t" style="left:1171px;top:572.64px;font-size:10.1px;color:#222;transform:scaleX(0.92);transform-origin:0 0">Test-1</div>
<div class="a" style="left:2px;top:588.143px;width:1394px;height:21.857px;background:#f6c6c6"></div>
<div class="a" style="left:2px;top:588px;width:1394px;height:1px;background:#d2d2d2"></div>
<div class="a" style="left:2px;top:610px;width:1394px;height:1px;background:#e2e2e2"></div>
<div class="t" style="left:7px;top:594.49px;font-size:10.1px;color:#222;transform:scaleX(0.92);transform-origin:0 0">9786</div>
<div class="t" style="left:50px;top:594.49px;font-size:10.1px;color:#222;transform:scaleX(0.92);transform-origin:0 0">CL</div>
<div class="t" style="left:111px;top:594.49px;font-size:10.1px;color:#222;transform:scaleX(0.92);transform-origin:0 0">ALI-7896</div>
<div class="t" style="left:263px;top:594.49px;font-size:10.1px;color:#222;transform:scaleX(0.92);transform-origin:0 0">NA</div>
<div class="t" style="left:493px;top:594.49px;font-size:10.1px;color:#222;transform:scaleX(0.92);transform-origin:0 0">HAMMER</div>
<div class="t" style="left:1060px;top:594.49px;font-size:10.1px;color:#222;transform:scaleX(0.92);transform-origin:0 0">VKO</div>
<div class="t" style="left:1171px;top:594.49px;font-size:10.1px;color:#222;transform:scaleX(0.92);transform-origin:0 0">004</div>
<div class="a" style="left:45px;top:151px;width:1px;height:459px;background:#d2d2d2"></div>
<div class="a" style="left:106px;top:151px;width:1px;height:459px;background:#d2d2d2"></div>
<div class="a" style="left:258px;top:151px;width:1px;height:459px;background:#d2d2d2"></div>
<div class="a" style="left:378px;top:151px;width:1px;height:459px;background:#d2d2d2"></div>
<div class="a" style="left:488px;top:151px;width:1px;height:459px;background:#d2d2d2"></div>
<div class="a" style="left:798px;top:151px;width:1px;height:459px;background:#d2d2d2"></div>
<div class="a" style="left:1055px;top:151px;width:1px;height:459px;background:#d2d2d2"></div>
<div class="a" style="left:1166px;top:151px;width:1px;height:459px;background:#d2d2d2"></div>
<div class="a" style="left:1278px;top:151px;width:1px;height:459px;background:#d2d2d2"></div>
<div class="a" style="left:1389px;top:151px;width:1px;height:459px;background:#d2d2d2"></div>
<div class="a" style="left:378px;top:172px;width:307px;height:314px;background:#fff;border:1px solid #656973;box-shadow:0 0 4px rgba(0,0,0,0.4)"></div>
<div class="a" style="left:379px;top:172px;width:305px;height:35.5px;background:#393c45"></div>
<svg style="left:388px;top:181px" width="18" height="18" viewBox="0 0 18 18">
<path d="M0 9.4 L8.9 0.6 L17.8 9.4 V11.9 L8.9 3.3 L0 11.9Z" fill="#fafafa"/>
<path d="M2.2 11.6 L8.9 5.1 L15.8 11.6 V17.8 H2.2Z" fill="#fafafa"/>
<path d="M5.6 11.9 H11.4 L9.7 10.3 M11.9 14.3 H6.3 L8 15.9" stroke="#393c45" stroke-width="1.05" fill="none"/>
</svg>
<div class="t" style="left:421.60px;top:184.79px;font-size:13.6px;color:#dcdcdc;font-weight:normal;transform:scaleX(0.945);transform-origin:0 0">MOVE TOOL</div>
<div class="a" style="left:605px;top:191px;width:8px;height:3px;background:#d8d8d8"></div>
<svg style="left:635px;top:186px" width="8" height="8" viewBox="0 0 8 8"><rect x="0.5" y="0.5" width="7" height="7" fill="none" stroke="#d0d0d0" stroke-width="1"/><rect x="0" y="0" width="8" height="1.8" fill="#d0d0d0"/></svg>
<svg style="left:664.5px;top:186px" width="9.5" height="9" viewBox="0 0 9.5 9"><path d="M0.6 0.5 L8.9 8.5 M8.9 0.5 L0.6 8.5" stroke="#e0e0e0" stroke-width="1.5"/></svg>
<div class="t" style="left:391.00px;top:224.19px;font-size:11.0px;color:#262626;font-weight:normal;">From Station: <span style="color:#f03a22;font-weight:bold;font-size:12px;position:relative;top:-0.5px">*</span></div>
<div class="inp" style="left:391px;top:239px;width:282px;height:21px;border-color:#dcd8d8"></div>
<div class="t" style="left:397.00px;top:244.11px;font-size:10.5px;color:#9a9a9a;font-weight:normal;">DME</div>
<svg style="left:661px;top:247.5px" width="7" height="5.4" viewBox="0 0 7 5.4"><path d="M0.6 0.6 L3.5 4.4 L6.4 0.6" fill="none" stroke="#aaa" stroke-width="1.0"/></svg>
<div class="t" style="left:391.00px;top:268.99px;font-size:11.0px;color:#262626;font-weight:normal;">To Station: <span style="color:#f03a22;font-weight:bold;font-size:12px;position:relative;top:-0.5px">*</span></div>
<div class="inp" style="left:391px;top:284.5px;width:282px;height:20.5px"></div>
<div class="t" style="left:397.00px;top:288.46px;font-size:10.8px;color:#1f45b5;font-weight:normal;-webkit-text-stroke:0.35px #1f45b5">Test-1</div>
<svg style="left:661px;top:292.5px" width="7" height="5.4" viewBox="0 0 7 5.4"><path d="M0.6 0.6 L3.5 4.4 L6.4 0.6" fill="none" stroke="#2b73f0" stroke-width="1.2"/></svg>
<div class="t" style="left:391.00px;top:313.49px;font-size:11.0px;color:#262626;font-weight:normal;">Move Date: <span style="color:#f03a22;font-weight:bold;font-size:12px;position:relative;top:-0.5px">*</span></div>
<div class="inp" style="left:391px;top:328.5px;width:282px;height:22px;border:1.3px solid #4b86f0"></div>
<div class="a" style="left:397px;top:334px;width:51.5px;height:11.5px;background:#a9c4f2"></div>
<div class="t" style="left:397.00px;top:334.08px;font-size:10.3px;color:#1f45b5;font-weight:normal;-webkit-text-stroke:0.45px #1f45b5">01.07.2023</div>
<svg style="left:659px;top:334px" width="10" height="10.5" viewBox="0 0 10 10.5">
<rect x="0.7" y="1.8" width="8.6" height="8" rx="1" fill="none" stroke="#2b73f0" stroke-width="1.3"/>
<rect x="0.7" y="1.8" width="8.6" height="2.2" fill="#2b73f0"/>
<rect x="2.3" y="0" width="1.3" height="2.4" fill="#2b73f0"/><rect x="6.4" y="0" width="1.3" height="2.4" fill="#2b73f0"/>
<rect x="5.4" y="6" width="2.2" height="2.2" fill="#2b73f0"/>
</svg>
<div class="t" style="left:391.00px;top:361.29px;font-size:11.0px;color:#262626;font-weight:normal;">Time:</div>
<div class="inp" style="left:391px;top:375.3px;width:138px;height:22px"></div>
<div class="t" style="left:397.00px;top:379.61px;font-size:10.5px;color:#262626;font-weight:normal;">5</div>
<div class="inp" style="left:534.5px;top:375.3px;width:138px;height:22px"></div>
<div class="t" style="left:540.70px;top:379.61px;font-size:10.5px;color:#262626;font-weight:normal;">58</div>
<svg style="left:518px;top:377px" width="10" height="17" viewBox="0 0 10 17"><path d="M0.5 4 H9.5 M5 0 V8 M0.5 15.2 H9.5" stroke="#555" stroke-width="1.3"/></svg>
<svg style="left:662px;top:377px" width="10" height="17" viewBox="0 0 10 17"><path d="M0.5 4 H9.5 M5 0 V8 M0.5 15.2 H9.5" stroke="#555" stroke-width="1.3"/></svg>
<div class="t" style="left:391.00px;top:405.89px;font-size:11.0px;color:#262626;font-weight:normal;">Sent By: <span style="color:#f03a22;font-weight:bold;font-size:12px;position:relative;top:-0.5px">*</span></div>
<div class="inp" style="left:391px;top:421.3px;width:282px;height:21px"></div>
<div class="t" style="left:397.00px;top:426.90px;font-size:10.4px;color:#1f45b5;font-weight:normal;-webkit-text-stroke:0.35px #1f45b5;transform:scaleX(0.94);transform-origin:0 0">DEM</div>
<svg style="left:661px;top:429.5px" width="7" height="5.4" viewBox="0 0 7 5.4"><path d="M0.6 0.6 L3.5 4.4 L6.4 0.6" fill="none" stroke="#2b73f0" stroke-width="1.2"/></svg>
<div class="a" style="left:482px;top:446.3px;width:44px;height:28px;background:#2a6ff0;border-radius:3px;box-shadow:0 1px 2px rgba(0,0,0,0.3)"></div>
<div class="t" style="left:491.60px;top:455.27px;font-size:10.9px;color:#fff;font-weight:normal;transform:scaleX(0.95);transform-origin:0 0">Save</div>
<div class="a" style="left:530px;top:446.3px;width:56px;height:27.6px;background:#2a6ff0;border-radius:3px;box-shadow:0 1px 2px rgba(0,0,0,0.3)"></div>
<div class="t" style="left:541.00px;top:455.27px;font-size:10.9px;color:#fff;font-weight:normal;">Cancel</div>
<svg style="left:0;top:0;will-change:transform" width="1396" height="746" viewBox="0 0 1396 746">
<path d="M434.1 384.1 L531 490 L497.5 510.5 Z" fill="#0c9bf6"/>
<circle cx="522.2" cy="513.8" r="22.6" fill="#0c9bf6" stroke="#fff" stroke-width="1.4"/>
<circle cx="522.2" cy="513.8" r="23.3" fill="none" stroke="#222" stroke-width="1.4"/>
<text x="522.4" y="523.2" font-family="Liberation Sans" font-weight="bold" font-size="22.8" fill="#fff" stroke="#fff" stroke-width="0.9" text-anchor="middle">7</text>
</svg>
<div class="a" style="left:1.3px;top:644.8px;width:1400px;height:14px;border:1px solid #d9d4d4;border-radius:7px 0 0 7px"></div>
<div class="a" style="left:2.8px;top:646.8px;width:560px;height:10px;background:#c6bebe;border-radius:5px"></div>
<div class="t" style="left:16.80px;top:670.70px;font-size:9.8px;color:#333;font-weight:normal;">Records: 21</div>
<div class="t" style="left:1317.00px;top:670.62px;font-size:9.9px;color:#333;font-weight:normal;">Legend</div>
<svg style="left:1368px;top:667px" width="17" height="17" viewBox="0 0 17 17">
<circle cx="8.5" cy="8.5" r="8" fill="#393c45"/>
<path d="M3.4 8.5 C5.2 5.6 11.8 5.6 13.6 8.5 C11.8 11.4 5.2 11.4 3.4 8.5Z" fill="#fff"/>
<circle cx="8.5" cy="8.5" r="1.6" fill="#393c45"/>
</svg>
<div class="a" style="left:1px;top:692px;width:1395px;height:1px;background:#d6d2d2"></div>
<svg style="left:8px;top:703px" width="15" height="10" viewBox="0 0 15 10"><path d="M1 8.8 L7.2 2 L13.4 8.8" fill="none" stroke="#111" stroke-width="2.1"/></svg>
<svg style="left:29px;top:701px" width="14" height="15" viewBox="0 0 14 15"><path d="M1 7.6 L6.6 2 L12.2 7.6 M1 13.8 L6.6 8.2 L12.2 13.8" fill="none" stroke="#111" stroke-width="2.1"/></svg>
<div class="t" style="left:50.20px;top:700.00px;font-size:13.0px;color:#111;font-weight:bold;">Tools assy</div>
<div class="a" style="left:134px;top:697px;width:1px;height:19px;background:#dcdcdc"></div>
<svg style="left:146px;top:698.5px" width="15" height="17" viewBox="0 0 15 17">
<rect x="0" y="0" width="15" height="16.7" fill="#c9cbd2"/>
<rect x="2" y="1.1" width="2" height="7.7" fill="#fff" opacity="0.35"/><rect x="2" y="2.9" width="2" height="1.2" fill="#fff" opacity="0.75"/><rect x="2" y="5.9" width="2" height="1.3" fill="#fff" opacity="0.3"/><rect x="4.9" y="1.1" width="3.1999999999999993" height="7.7" fill="#fff" opacity="0.35"/><rect x="4.9" y="2.9" width="3.1999999999999993" height="1.2" fill="#fff" opacity="0.75"/><rect x="4.9" y="5.9" width="3.1999999999999993" height="1.3" fill="#fff" opacity="0.3"/><rect x="8.7" y="1.1" width="4.200000000000001" height="7.7" fill="#fff" opacity="0.35"/><rect x="8.7" y="2.9" width="4.200000000000001" height="1.2" fill="#fff" opacity="0.75"/><rect x="8.7" y="5.9" width="4.200000000000001" height="1.3" fill="#fff" opacity="0.3"/>
<path d="M8.6 11.2 L12.6 15.2 M12.4 11.2 L8.8 15.2" stroke="#fff" stroke-width="1.25"/>
</svg>
<div class="a" style="left:1px;top:724px;width:1395px;height:21px;background:#838083"></div>
<div class="t" style="left:18.90px;top:729.58px;font-size:9.0px;color:#eaeaea;font-weight:normal;">User: DEM</div>
<div class="t" style="left:78.50px;top:729.58px;font-size:9.0px;color:#eaeaea;font-weight:normal;">Permission: Full</div>
</body></html>
